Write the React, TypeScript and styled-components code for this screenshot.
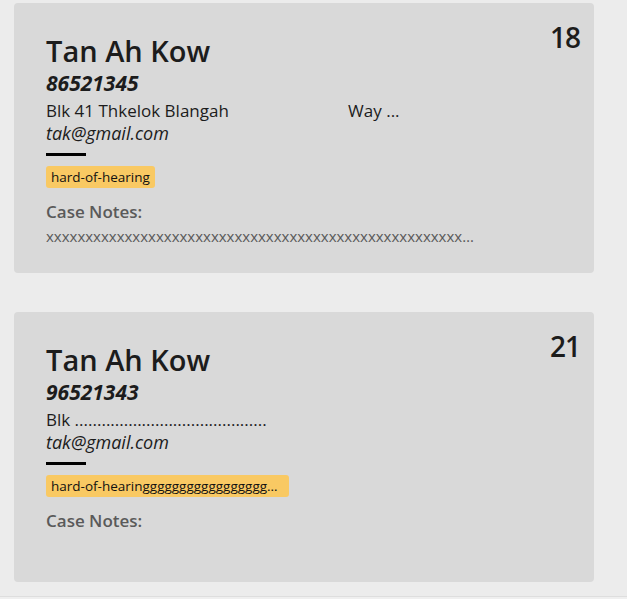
import React from "react";
import styled, { createGlobalStyle } from "styled-components";

const Global = createGlobalStyle`
  html, body { margin: 0; padding: 0; background: #ececec; }
  body { font-family: "Open Sans", "Noto Sans", sans-serif; }
`;

const Page = styled.div`
  width: 627px;
  height: 599px;
  box-sizing: border-box;
  background: #ececec;
  display: flex;
  flex-direction: column;
  border-bottom: 2px solid #efefef;
`;

const List = styled.div`
  flex: 1;
  display: flex;
  flex-direction: column;
  gap: 39px;
  padding: 3px 33px 0 14px;
  border-bottom: 1px solid #dedede;
`;

const Card = styled.div`
  height: 270px;
  box-sizing: border-box;
  background: #d9d9d9;
  border-radius: 4px;
  display: flex;
  justify-content: space-between;
  padding: 20px 14px 0 32px;
`;

const Body = styled.div`
  display: flex;
  flex-direction: column;
  align-items: flex-start;
  min-width: 0;
  padding-top: 10px;
`;

const Name = styled.div`
  font-size: 29px;
  font-weight: 600;
  color: #1c1c1c;
  line-height: 36px;
`;

const Phone = styled.div`
  font-size: 21px;
  font-weight: 700;
  font-style: italic;
  color: #1c1c1c;
  line-height: 28px;
`;

const Address = styled.div`
  font-size: 17px;
  color: #1c1c1c;
  line-height: 22px;
  margin-top: 3px;
  white-space: pre;
`;

const Email = styled.div`
  font-size: 18px;
  font-style: italic;
  color: #1c1c1c;
  line-height: 22px;
`;

const Rule = styled.div`
  width: 40px;
  height: 3px;
  background: #000;
  margin-top: 9px;
`;

const Tags = styled.div`
  display: flex;
  gap: 4px;
  margin-top: 10px;
`;

const Tag = styled.span`
  display: block;
  background: #f9c963;
  border-radius: 3px;
  color: #111;
  font-size: 13.5px;
  line-height: 22px;
  padding: 0 5px;
  max-width: 233px;
  white-space: nowrap;
  overflow: hidden;
  text-overflow: ellipsis;
`;

const NotesLabel = styled.div`
  font-size: 17px;
  font-weight: 600;
  color: #5a5a5a;
  margin-top: 13px;
  line-height: 22px;
`;

const Notes = styled.div`
  font-size: 15px;
  color: #5a5a5a;
  line-height: 22px;
  margin-top: 2px;
  max-width: 430px;
  white-space: nowrap;
  overflow: hidden;
  text-overflow: ellipsis;
`;

const Index = styled.div`
  font-size: 28px;
  font-weight: 600;
  color: #1c1c1c;
  line-height: 28px;
  letter-spacing: -1px;
`;

type Person = {
  id: number;
  name: string;
  phone: string;
  address: string;
  email: string;
  tags: string[];
  notes: string;
};

const people: Person[] = [
  {
    id: 18,
    name: "Tan Ah Kow",
    phone: "86521345",
    address: "Blk 41 Thkelok Blangah" + " ".repeat(27) + "Way ...",
    email: "tak@gmail.com",
    tags: ["hard-of-hearing"],
    notes: "x".repeat(120),
  },
  {
    id: 21,
    name: "Tan Ah Kow",
    phone: "96521343",
    address: "Blk " + ".".repeat(43),
    email: "tak@gmail.com",
    tags: ["hard-of-hearinggggggggggggggggggggggggggggg"],
    notes: "",
  },
];

export default function App() {
  return (
    <>
      <Global />
      <Page>
        <List>
          {people.map((p) => (
            <Card key={p.id}>
              <Body>
                <Name>{p.name}</Name>
                <Phone>{p.phone}</Phone>
                <Address>{p.address}</Address>
                <Email>{p.email}</Email>
                <Rule />
                <Tags>
                  {p.tags.map((t) => (
                    <Tag key={t}>{t}</Tag>
                  ))}
                </Tags>
                <NotesLabel>Case Notes:</NotesLabel>
                {p.notes && <Notes>{p.notes}</Notes>}
              </Body>
              <Index>{p.id}</Index>
            </Card>
          ))}
        </List>
      </Page>
    </>
  );
}
